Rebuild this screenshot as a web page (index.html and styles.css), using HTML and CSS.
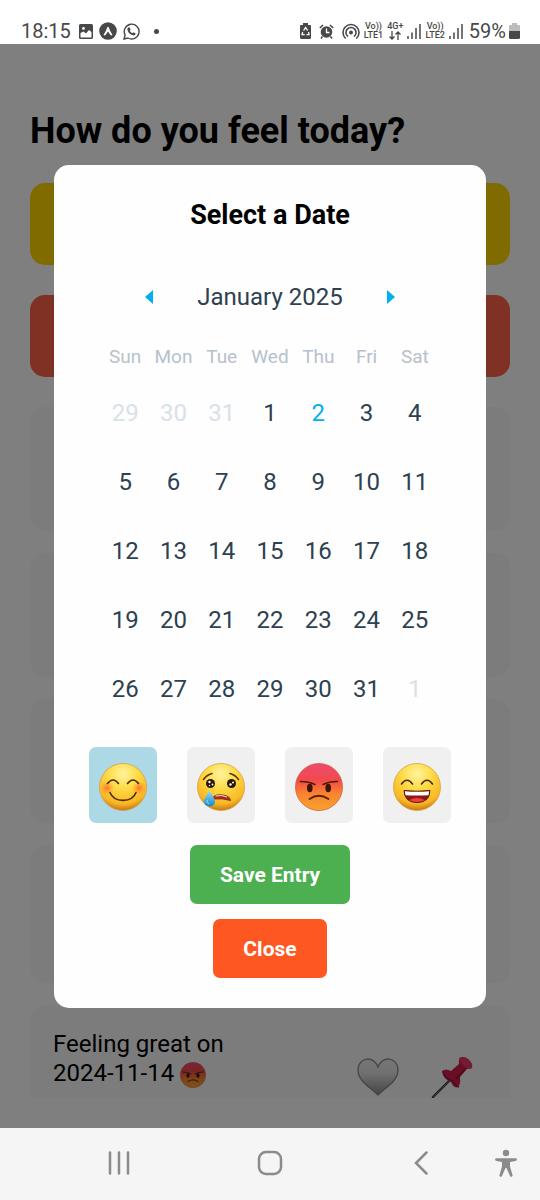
FILE: index.html
```html
<!DOCTYPE html>
<html lang="en">
<head>
<meta charset="utf-8">
<meta name="viewport" content="width=device-width, initial-scale=1">
<title>Mood diary</title>
<link rel="stylesheet" href="styles.css">
</head>
<body>
<svg class="defs" width="0" height="0" aria-hidden="true">
  <defs>
    <radialGradient id="gold" cx="50%" cy="22%" r="80%">
      <stop offset="0" stop-color="#fff3a0"/><stop offset=".4" stop-color="#fddb45"/><stop offset=".8" stop-color="#f9b624"/><stop offset="1" stop-color="#b96f14"/>
    </radialGradient>
    <linearGradient id="rage" x1="0" y1="0" x2="0" y2="1">
      <stop offset="0" stop-color="#ee4a70"/><stop offset=".35" stop-color="#f2494b"/><stop offset=".65" stop-color="#f98530"/><stop offset="1" stop-color="#f7a42a"/>
    </linearGradient>
    <radialGradient id="blush">
      <stop offset="0" stop-color="#ff6a2c" stop-opacity=".9"/><stop offset="1" stop-color="#ff8a2c" stop-opacity="0"/>
    </radialGradient>
    <linearGradient id="tear" x1="0" y1="0" x2="0" y2="1">
      <stop offset="0" stop-color="#9be1fa"/><stop offset="1" stop-color="#1787c9"/>
    </linearGradient>
    <linearGradient id="silver" x1="0" y1="0" x2="0" y2="1">
      <stop offset="0" stop-color="#ededed"/><stop offset=".4" stop-color="#e0e0e0"/><stop offset="1" stop-color="#8c8c8c"/>
    </linearGradient>
    <symbol id="angry" viewBox="0 0 48 48">
      <circle cx="24" cy="24" r="23.500" fill="url(#rage)" stroke="#d0603a" stroke-width=".8"/>
      <path d="M5.500 18.500Q14 18.500 20 21.500M42.500 18.500Q34 18.500 28 21.500" fill="none" stroke="#4b1c0a" stroke-width="1.600" stroke-linecap="round"/>
      <ellipse cx="14.800" cy="25" rx="2.800" ry="4.200" fill="#3a1508"/><ellipse cx="33.200" cy="25" rx="2.800" ry="4.200" fill="#3a1508"/>
      <path d="M14.500 36Q24 29.500 33.500 36" fill="none" stroke="#5a2208" stroke-width="1.800" stroke-linecap="round"/>
    </symbol>
    <symbol id="signal" viewBox="0 0 14 16">
      <path d="M1 13v3M5 9.500V16M9 5v11M13 1v15" stroke="currentColor" stroke-width="1.500"/>
    </symbol>
  </defs>
</svg>

<header class="status">
  <span class="clock">18:15</span>
  <div class="notices">
    <svg width="14" height="15" viewBox="0 0 14 15"><path fill="currentColor" fill-rule="evenodd" d="M1.500 0h11A1.500 1.500 0 0 1 14 1.500v12a1.500 1.500 0 0 1-1.500 1.500h-11A1.500 1.500 0 0 1 0 13.500v-12A1.500 1.500 0 0 1 1.500 0ZM1.500 9v4.500h11V8L10 6 7 9.500 4.500 7.500ZM4.500 3a1.400 1.400 0 1 0 0 2.800 1.400 1.400 0 0 0 0-2.800Z"/></svg>
    <svg width="18" height="18" viewBox="0 0 18 18"><circle cx="9" cy="9" r="8.800" fill="currentColor"/><path d="M4.500 13Q7 9.500 8.200 5.600Q9 4 9.800 5.600Q11 9.500 13.500 13L12 13.600Q10.500 12 9 9.600Q7.500 12 6 13.600Z" fill="#fff"/></svg>
    <svg width="17" height="17" viewBox="0 0 17 17"><path d="M1 16l1.100-4A7.400 7.400 0 1 1 5 15Z" fill="none" stroke="currentColor" stroke-width="1.400"/><path d="M5.200 4.500l1.300-.3 1.100 2.300-.8 1.200q.9 1.700 2.600 2.500l1.100-1 2.200 1.200q-.2 2-2.200 2.100-5.700-1.200-6.200-6.400Z" fill="currentColor"/></svg>
    <span class="more"></span>
  </div>
  <div class="system">
    <svg width="11" height="16" viewBox="0 0 11 16"><path d="M3 0h5v2h2q1 0 1 1v11.500q0 1.500-1.500 1.500h-8Q0 16 0 14.500V3q0-1 1-1h2Z" fill="currentColor"/><path d="M3.600 7.500l2-3 2 3M8.600 9l.4 2.700H6.500M4.700 11.700H2L2.700 9" fill="none" stroke="#fff" stroke-width="1.300"/></svg>
    <svg width="15" height="15" viewBox="0 0 15 15"><circle cx="7.500" cy="8" r="5.800" fill="currentColor"/><path d="M.8 4L4 1M14.200 4L11 1M3.500 12.500l-1.500 2M11.500 12.500l1.500 2" stroke="currentColor" stroke-width="1.600"/><path d="M7.500 4.500V8.500h3" fill="none" stroke="#fff" stroke-width="1.300"/></svg>
    <svg width="18" height="16" viewBox="0 0 18 16"><circle cx="9" cy="9.500" r="2" fill="currentColor"/><path d="M6 13.500a5 5 0 1 1 6 0M3.700 15.500a8 8 0 1 1 10.600 0" fill="none" stroke="currentColor" stroke-width="1.600"/></svg>
    <span class="carrier">Vo))<br>LTE1</span>
    <span class="carrier">4G+<svg width="12" height="9" viewBox="0 0 12 9"><path d="M3 0v8M.5 5.500L3 8l2.500-2.500M9 9V1M6.500 3.500L9 1l2.500 2.500" fill="none" stroke="currentColor" stroke-width="1.300"/></svg></span>
    <svg width="14" height="16"><use href="#signal"/></svg>
    <span class="carrier">Vo))<br>LTE2</span>
    <svg width="14" height="16"><use href="#signal"/></svg>
    <span class="charge">59%</span>
    <svg class="battery" width="11" height="16" viewBox="0 0 11 16"><path d="M3 0h5v2h2q1 0 1 1v5H0V3q0-1 1-1h2Z" fill="#bcbcbc"/><path d="M0 8h11v6.500q0 1.500-1.500 1.500h-8Q0 16 0 14.500Z" fill="currentColor"/></svg>
  </div>
</header>

<main class="app">
  <div class="diary">
    <h1 class="question">How do you feel today?</h1>
    <div class="banner banner-yellow"></div>
    <div class="banner banner-red"></div>
    <div class="entries">
      <div class="entry"></div>
      <div class="entry"></div>
      <div class="entry"></div>
      <div class="entry entry-tall"></div>
      <article class="entry entry-tall">
        <p class="entry-text">Feeling great on<br>2024-11-14 <svg class="mood" width="26" height="26" role="img" aria-label="Angry"><use href="#angry"/></svg></p>
        <div class="entry-actions">
          <button class="plain" aria-label="Like"><svg width="42" height="38" viewBox="0 0 42 38"><path d="M21 37C13 29 1 23 1 12C1-1 17-3 21 9C25-3 41-1 41 12C41 23 29 29 21 37Z" fill="url(#silver)" stroke="#8a8a8a" stroke-width="1.300"/></svg></button>
          <button class="plain" aria-label="Pin"><svg width="42" height="42" viewBox="0 0 42 42"><path d="M2 41L20 23" stroke="#333" stroke-width="2.400" stroke-linecap="round"/><path d="M2 41L18 25" stroke="#999" stroke-width=".7"/><path d="M11 15Q15 12 20 15L28 8Q27 1 32 1Q38 2 41 8Q42 13 36 13L29 21Q30 28 27 31Q23 33 20 26Q12 23 11 15Z" fill="#d01e4c"/><path d="M28 2Q30 11 40 13Q43 10 39 5Q34-1 28 2Z" fill="#e63a64"/><path d="M12 15Q13 23 22 25Q24 30 28 31M25 23L34 13" fill="none" stroke="#92143a" stroke-width="1.400"/></svg></button>
        </div>
      </article>
    </div>
  </div>

  <div class="backdrop">
    <section class="dialog" role="dialog" aria-modal="true" aria-labelledby="dialog-title">
      <h2 class="dialog-title" id="dialog-title">Select a Date</h2>
      <div class="calendar">
        <div class="month">
          <button class="plain arrow" aria-label="Previous month"><svg width="8" height="14" viewBox="0 0 8 14"><path d="M8 0v14L0 7Z" fill="currentColor"/></svg></button>
          <span class="month-name">January 2025</span>
          <button class="plain arrow" aria-label="Next month"><svg width="8" height="14" viewBox="0 0 8 14"><path d="M0 0v14l8-7Z" fill="currentColor"/></svg></button>
        </div>
        <table class="days">
          <thead><tr><th>Sun</th><th>Mon</th><th>Tue</th><th>Wed</th><th>Thu</th><th>Fri</th><th>Sat</th></tr></thead>
          <tbody>
            <tr><td class="outside">29</td><td class="outside">30</td><td class="outside">31</td><td>1</td><td class="today">2</td><td>3</td><td>4</td></tr>
            <tr><td>5</td><td>6</td><td>7</td><td>8</td><td>9</td><td>10</td><td>11</td></tr>
            <tr><td>12</td><td>13</td><td>14</td><td>15</td><td>16</td><td>17</td><td>18</td></tr>
            <tr><td>19</td><td>20</td><td>21</td><td>22</td><td>23</td><td>24</td><td>25</td></tr>
            <tr><td>26</td><td>27</td><td>28</td><td>29</td><td>30</td><td>31</td><td class="outside">1</td></tr>
          </tbody>
        </table>
      </div>
      <div class="moods">
        <button class="mood-button selected" aria-label="Happy" aria-pressed="true"><svg width="48" height="48" viewBox="0 0 48 48"><circle cx="24" cy="24" r="23.500" fill="url(#gold)" stroke="#d9a041" stroke-width=".8"/><circle cx="8" cy="25" r="7" fill="url(#blush)"/><circle cx="40" cy="25" r="7" fill="url(#blush)"/><path d="M8.500 20.500Q14 13.500 19.500 20.500M28.500 20.500Q34 13.500 39.500 20.500M11 29.500C15 40 33 40 37 29.500" fill="none" stroke="#4d2c05" stroke-width="1.600" stroke-linecap="round"/></svg></button>
        <button class="mood-button" aria-label="Sad" aria-pressed="false"><svg width="48" height="48" viewBox="0 0 48 48"><circle cx="24" cy="24" r="23.500" fill="url(#gold)" stroke="#d9a041" stroke-width=".8"/><path d="M6.500 16.500Q9.500 12 15 10.500M41.500 16.500Q38.500 12 33 10.500" fill="none" stroke="#5d3606" stroke-width="1.600" stroke-linecap="round"/><circle cx="13.500" cy="20.500" r="4.500" fill="#2a1505"/><circle cx="34.500" cy="20.500" r="4.500" fill="#2a1505"/><g fill="#fff"><circle cx="12.500" cy="19" r="1.200"/><circle cx="15.500" cy="21.500" r=".9"/><circle cx="12.500" cy="22.500" r=".7"/><circle cx="33.500" cy="21.500" r="1.200"/><circle cx="36" cy="19.500" r="1"/></g><path d="M16 34.500Q18 31 26 32Q33 33 33.500 37.500Q26 35 16 36Z" fill="#b6271d" stroke="#6b2408" stroke-width=".8"/><path d="M18.500 33Q25 31.500 30 34" stroke="#eee" stroke-width="1" fill="none"/><path d="M12.500 27C10 33 7 35 7 38.500C7 45 18 45 18 38.500C18 35 14 31 12.500 27Z" fill="url(#tear)"/><path d="M10 37Q9.500 40 12 41" stroke="#9fdcf5" stroke-width="1" fill="none"/></svg></button>
        <button class="mood-button" aria-label="Angry" aria-pressed="false"><svg width="48" height="48"><use href="#angry"/></svg></button>
        <button class="mood-button" aria-label="Excited" aria-pressed="false"><svg width="48" height="48" viewBox="0 0 48 48"><circle cx="24" cy="24" r="23.500" fill="url(#gold)" stroke="#d9a041" stroke-width=".8"/><path d="M8.500 21Q14 13.500 19.500 21M28.500 21Q34 13.500 39.500 21" fill="none" stroke="#4d2c05" stroke-width="1.600" stroke-linecap="round"/><path d="M11 27.500Q24 29 37 27.500Q36.500 39.500 24 39.500Q11.500 39.500 11 27.500Z" fill="#8f1717" stroke="#4d1c05"/><path d="M11.800 28.200Q24 29.500 36.200 28.200L35.500 32.200Q24 33 12.500 32.200Z" fill="#fff"/><path d="M16 37.300Q24 32.500 32 37.300Q24 40.500 16 37.300Z" fill="#ee4040"/></svg></button>
      </div>
      <button class="action action-save">Save Entry</button>
      <button class="action action-close">Close</button>
    </section>
  </div>
</main>

<nav class="navbar" aria-label="System">
  <button class="plain" aria-label="Recent apps"><svg width="22" height="24" viewBox="0 0 22 24"><path d="M2 1.500v21M11 1.500v21M20 1.500v21" stroke="currentColor" stroke-width="2.500" stroke-linecap="round"/></svg></button>
  <button class="plain" aria-label="Home"><svg width="26" height="26" viewBox="0 0 26 26"><rect x="2" y="2" width="22" height="22" rx="7" fill="none" stroke="currentColor" stroke-width="2.500"/></svg></button>
  <button class="plain" aria-label="Back"><svg width="14" height="24" viewBox="0 0 14 24"><path d="M12.500 1.500L2 12l10.500 10.500" fill="none" stroke="currentColor" stroke-width="2.500" stroke-linecap="round"/></svg></button>
  <button class="plain" aria-label="Accessibility"><svg width="22" height="28" viewBox="0 0 22 28"><circle cx="11" cy="4" r="3.200" fill="currentColor"/><path d="M1.500 9.200h19a1.400 1.400 0 0 1 0 2.800L15 13v4.500l2.500 8.500a1.300 1.300 0 0 1-2.600.8L11.500 19h-1L7.100 26.800A1.300 1.300 0 0 1 4.500 26L7 17.500V13l-5.500-1a1.400 1.400 0 0 1 0-2.800Z" fill="currentColor"/></svg></button>
</nav>
</body>
</html>
```
FILE: styles.css
```css
* {
  box-sizing: border-box;
}

body {
  margin: 0;
  min-height: 100vh;
  display: flex;
  flex-direction: column;
  font-family: Roboto, "Liberation Sans", sans-serif;
  color: #000;
  background: #fff;
}

h1,
h2,
p {
  margin: 0;
}

svg {
  display: block;
  flex: none;
}

.defs {
  position: absolute;
}

.plain {
  display: flex;
  align-items: center;
  justify-content: center;
  padding: 0;
  border: 0;
  background: none;
  color: inherit;
}

.status {
  display: flex;
  align-items: center;
  height: 44px;
  padding: 18px 20px 0 21px;
  color: #484848;
  font-size: 20px;
  line-height: 24px;
}

.notices {
  display: flex;
  align-items: center;
  gap: 6px;
  margin-left: 8px;
}

.more {
  width: 5px;
  height: 5px;
  margin-left: 8px;
  border-radius: 50%;
  background: currentColor;
}

.system {
  display: flex;
  align-items: center;
  gap: 4px;
  margin-left: auto;
}

.system > svg:nth-child(-n+2) {
  margin-right: 4px;
}

.carrier {
  display: flex;
  flex-direction: column;
  align-items: center;
  font-size: 9px;
  font-weight: 500;
  line-height: 9px;
  text-align: center;
}

.charge {
  margin-left: 2px;
}

.battery {
  margin-left: -1px;
}

.app {
  flex: 1;
  position: relative;
  display: flex;
  flex-direction: column;
}

.diary {
  flex: 1 1 0;
  display: flex;
  flex-direction: column;
  min-height: 0;
  padding: 66px 30px 30px;
}

.question {
  margin-bottom: 30px;
  font-size: 36px;
  line-height: 43px;
}

.banner {
  flex: none;
  height: 82px;
  margin-bottom: 30px;
  border-radius: 15px;
}

.banner-yellow {
  background: #ffd700;
}

.banner-red {
  background: #ff6347;
}

.entries {
  flex: 1 1 0;
  min-height: 0;
  overflow: hidden;
}

.entry {
  display: flex;
  justify-content: space-between;
  min-height: 124px;
  margin-bottom: 22px;
  padding: 25px 37px 19px 23px;
  border-radius: 15px;
  background: #f9f9f9;
}

.entry-tall {
  min-height: 138px;
}

.entry-text {
  font-size: 24px;
  line-height: 29px;
}

.mood {
  display: inline-block;
  vertical-align: middle;
}

.entry-actions {
  display: flex;
  align-items: center;
  gap: 32px;
}

.backdrop {
  position: absolute;
  inset: 0;
  display: flex;
  align-items: center;
  justify-content: center;
  background: rgba(0, 0, 0, 0.5);
}

.dialog {
  display: flex;
  flex-direction: column;
  align-items: center;
  width: 80%;
  padding: 30px 35px;
  border-radius: 15px;
  background: #fefefe;
}

.dialog-title {
  margin-bottom: 32px;
  font-size: 27px;
  line-height: 40px;
}

.calendar {
  width: 100%;
  padding: 0 12px;
}

.month {
  display: flex;
  align-items: center;
  justify-content: space-between;
  height: 60px;
  padding: 0 44px;
  color: #2d4150;
  font-size: 24px;
}

.arrow {
  color: #00b0f0;
}

.days {
  width: 100%;
  margin-top: 15px;
  border-collapse: collapse;
  table-layout: fixed;
  text-align: center;
}

.days th {
  height: 37px;
  padding: 0 0 7px;
  color: #b6c1cd;
  font-size: 19px;
  font-weight: 400;
}

.days td {
  height: 69px;
  padding: 0;
  color: #2d4150;
  font-size: 24px;
}

.days .outside {
  color: #d9e1e8;
}

.days .today {
  color: #00b0f0;
}

.moods {
  display: flex;
  justify-content: space-between;
  width: 100%;
  margin: 23px 0 22px;
}

.mood-button {
  display: flex;
  align-items: center;
  justify-content: center;
  width: 68px;
  height: 76px;
  padding: 5px 0 0;
  border: 0;
  border-radius: 7px;
  background: #f0f0f0;
}

.mood-button.selected {
  background: #add8e6;
}

.action {
  padding: 18px 30px 16px;
  border: 0;
  border-radius: 7px;
  color: #fff;
  font: 700 21px/25px Roboto, "Liberation Sans", sans-serif;
}

.action-save {
  margin-bottom: 15px;
  background: #4caf50;
}

.action-close {
  background: #ff5722;
}

.navbar {
  display: grid;
  grid-template-columns: 1fr 1fr 1fr 20px;
  align-items: center;
  height: 72px;
  padding: 0 24px 2px 44px;
  background: #f5f5f5;
  color: #8b8b8b;
}
```
